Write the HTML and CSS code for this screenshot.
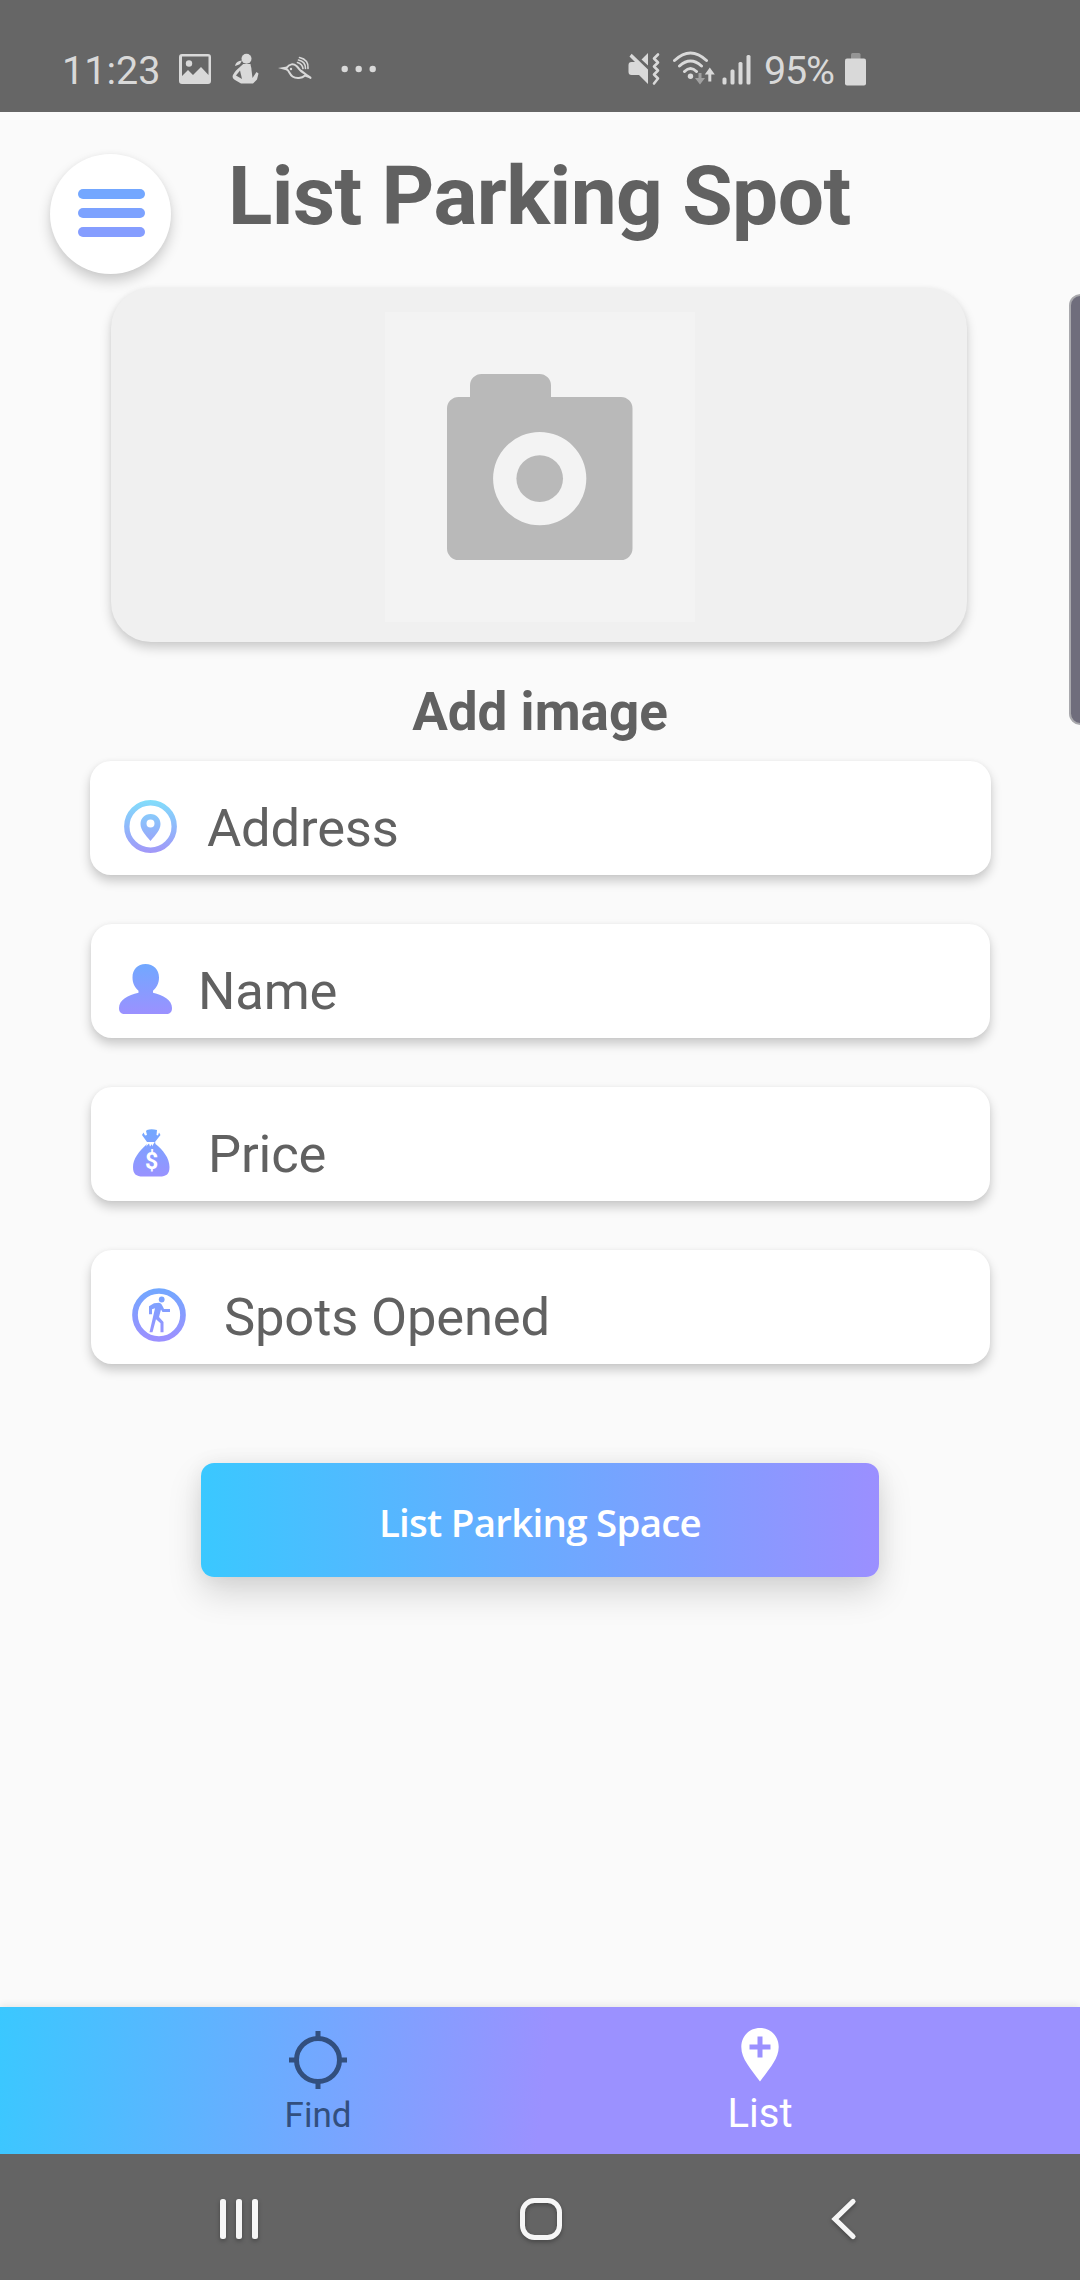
FILE: index.html
```html
<!DOCTYPE html>
<html lang="en">
<head>
<meta charset="utf-8">
<title>List Parking Spot</title>
<link rel="stylesheet" href="styles.css">
</head>
<body>
<svg class="defs" width="0" height="0" aria-hidden="true">
  <defs>
    <linearGradient id="sky" x1="0" y1="0" x2="0" y2="53" gradientUnits="userSpaceOnUse"><stop offset="0" stop-color="#82defb"/><stop offset=".5" stop-color="#8fb9fb"/><stop offset="1" stop-color="#a297f8"/></linearGradient>
    <linearGradient id="iris" x1="0" y1="0" x2="0" y2="50" gradientUnits="userSpaceOnUse"><stop offset="0" stop-color="#71a8ff"/><stop offset="1" stop-color="#9b91ff"/></linearGradient>
  </defs>
</svg>
<div class="screen">
  <header class="status">
    <span class="time">11:23</span>
    <svg class="notif" width="200" height="40" viewBox="0 0 200 40" fill="#d9d9d9">
      <path fill-rule="evenodd" d="M3 2h26a3 3 0 0 1 3 3v24a3 3 0 0 1-3 3H3a3 3 0 0 1-3-3V5a3 3 0 0 1 3-3zM3 4.500V24l6-6 5 5 8-8 7.500 8V4.500z"/>
      <circle cx="10" cy="11.500" r="3.200"/>
      <circle cx="67.500" cy="6.800" r="5"/>
      <path d="M64 12c-1 2-6 4-10 11-1 2 0 4 2 5l6 3.500h12l4-4 1.500-6-2-1.500-4 6-1-8c0-3-1-4-1-6z"/>
      <path d="M56 14c1-4 3-5 7-5.500L61 12c-1 1-3 1-5 2z"/>
      <path fill="#666" d="M57 23.500l4-5 2 8.500z"/>
      <path d="M99 16l9-1.500v4z"/>
      <path fill="none" stroke="#d9d9d9" stroke-width="2" stroke-linecap="round" stroke-linejoin="round" d="M107.500 16c3-4.500 7-4.500 10-2 3 3 4 5.500 6.500 6.500l7.500 5-5.500-2c-3 3-9 3.500-12.500 1-3-2-3-5.500-6-7.500M122.500 19l9 7"/>
      <path fill="none" stroke="#d9d9d9" stroke-width="1.600" stroke-linecap="round" d="M118.500 10.500c3.500 1 5 3 5.500 6M119.500 8c5 1 7 4.500 7 8.500M120.500 5.500c6.500 1.500 9 6 8.500 11"/>
      <circle cx="112" cy="17" r="1.200"/>
      <circle cx="165.700" cy="17" r="3.200"/><circle cx="179.700" cy="17" r="3.200"/><circle cx="193.700" cy="17" r="3.200"/>
    </svg>
    <svg class="signals" width="124" height="40" viewBox="0 0 124 40" fill="#d9d9d9">
      <path d="M3.500 11H7L1.500 5.500l2.200-2.700L20 18.500V33l-9-9H3.500a3 3 0 0 1-3-3v-7a3 3 0 0 1 3-3zM13.500 8.500L20 2v12.500z"/>
      <path fill="none" stroke="#d9d9d9" stroke-width="2.600" stroke-linecap="round" stroke-linejoin="round" d="M30 3.500l-4 4 4 4-4 4 4 4-4 4 4 4-4 5"/>
      <g fill="none" stroke="#d9d9d9" stroke-width="3" stroke-linecap="round"><path d="M46.500 9.500q16-15 32 0M51.500 15q11-10 22 0M56.500 20.500q6-6 12 0"/></g>
      <circle cx="62.500" cy="25.300" r="2.700"/>
      <path fill="#a0a0a0" d="M70.500 22h3v5h3.500l-5 6.500-5-6.500h3.500z"/>
      <path d="M80.300 30.500v-7h-3.500l5-7 5 7h-3.500v7z"/>
      <rect x="94.500" y="26.500" width="4" height="7" rx="1.500"/><rect x="102.500" y="18.500" width="4" height="15" rx="1.500"/><rect x="110.500" y="11" width="4" height="22.500" rx="1.500"/><rect x="118.500" y="4" width="4" height="29.500" rx="1.500"/>
    </svg>
    <span class="percent">95%</span>
    <svg class="battery" width="22" height="40" viewBox="0 0 22 40"><rect x="6" y="2" width="9.500" height="7" rx="1.500" fill="#959595"/><rect x="0" y="7.500" width="21" height="27" rx="2" fill="#d9d9d9"/></svg>
  </header>

  <main class="content">
    <div class="heading">
      <button class="menu" aria-label="Menu"><i class="bar top"></i><i class="bar middle"></i><i class="bar bottom"></i></button>
      <h1>List Parking Spot</h1>
    </div>

    <section class="photo">
      <div class="placeholder">
        <svg width="186" height="186" viewBox="0 0 186 186" fill="#b9b9b9">
          <path fill-rule="evenodd" d="M34.500 0h58a11.500 11.500 0 0 1 11.500 11.500V23h70a11.500 11.500 0 0 1 11.500 11.500v140a11.500 11.500 0 0 1-11.500 11.500H11.500a11.500 11.500 0 0 1-11.500-11.500v-140A11.500 11.500 0 0 1 11.500 23H23V11.500A11.500 11.500 0 0 1 34.500 0zM92.700 58a46.600 46.600 0 1 0 0 93.200 46.600 46.600 0 1 0 0-93.200z"/>
          <circle cx="92.700" cy="104.600" r="23.300"/>
        </svg>
      </div>
    </section>
    <h2>Add image</h2>

    <form class="fields">
      <label class="field address">
        <svg width="53" height="53" viewBox="0 0 53 53"><circle cx="26.500" cy="26.500" r="23.700" fill="none" stroke="url(#sky)" stroke-width="5.400"/><path fill="url(#sky)" fill-rule="evenodd" d="M26.500 14c6 0 10 4.500 10 10 0 6-5 11-10 17-5-6-10-11-10-17 0-5.500 4-10 10-10zm0 5.500a4 4 0 1 0 0 8 4 4 0 0 0 0-8z"/></svg>
        <span>Address</span>
      </label>
      <label class="field name">
        <svg width="53" height="50" viewBox="0 0 53 50"><path fill="url(#iris)" d="M26.500 0C34.500 0 40 5.500 40 13.500c0 6-2.500 10-6 13.200v2C44 31 53 36 53 44c0 4-2 6-6 6H6c-4 0-6-2-6-6 0-8 9-13 19.500-15.300v-2C16 23.500 13.500 19.500 13.500 13.500 13.500 5.500 18.500 0 26.500 0z"/></svg>
        <span>Name</span>
      </label>
      <label class="field price">
        <svg width="37" height="48" viewBox="0 0 37 48"><path fill="url(#iris)" d="M14 1c3-1 6-1 10 0l-.5 5 1.500.5 1-3 1.500 2.500-5.500 7h-8L9 6l1.500-2.500 1.500 3 2-.5-1-4zM14 15l-1 2.500 3-3 1 3 2-2.500v2.500l3-5 .5 2.500C30 21 36.500 29 36.500 38c0 7-3 9.500-10 9.500H10C3 47.500 0 45 0 38c0-8 6-16 14-23z"/><text x="18.400" y="40" class="dollar">$</text></svg>
        <span>Price</span>
      </label>
      <label class="field spots">
        <svg width="54" height="54" viewBox="0 0 54 54"><circle cx="27" cy="27" r="24" fill="none" stroke="url(#iris)" stroke-width="5.700"/><circle cx="29.700" cy="11.500" r="2.900" fill="url(#iris)"/><path fill="url(#iris)" d="M22 15.200l5-.5c2 0 3 2 5 6.300h6v3h-7.500l-1.500-2.500-2 7.500 4.500 5v10.300h-3v-9l-4.500-4-3.500 13h-3l5.500-24-3 1v5h-3v-8z"/></svg>
        <span>Spots Opened</span>
      </label>
    </form>

    <button class="submit">List Parking Space</button>
    <div class="edge-panel"></div>
  </main>

  <nav class="tabs">
    <a class="tab find">
      <svg width="58" height="67" viewBox="0 0 58 67" fill="none" stroke="#324f7e" stroke-width="5"><circle cx="29" cy="31" r="21.500"/><path d="M29 2v7M29 53v7M0 31h7M51 31h7"/></svg>
      <span>Find</span>
    </a>
    <a class="tab list">
      <svg width="38" height="54" viewBox="0 0 38 54"><path fill="#fff" fill-rule="evenodd" d="M19 0c11 0 18.700 8.300 18.700 19C37.700 31 28 41 19 53.500 10 41 .3 31 .3 19 .3 8.300 8 0 19 0zm-2.500 8.500v8h-8v5h8v8h5v-8h8v-5h-8v-8z"/></svg>
      <span>List</span>
    </a>
  </nav>

  <footer class="system">
    <svg width="40" height="46" viewBox="0 0 40 46" fill="#f6f6f6"><rect x="1" y="2" width="6" height="40" rx="2.500"/><rect x="17" y="2" width="6" height="40" rx="2.500"/><rect x="33" y="2" width="6" height="40" rx="2.500"/></svg>
    <svg width="42" height="46" viewBox="0 0 42 46"><rect x="2.500" y="3.500" width="37" height="37" rx="12" fill="none" stroke="#f6f6f6" stroke-width="5"/></svg>
    <svg width="26" height="46" viewBox="0 0 26 46"><path d="M22 4.500L4 22l18 17.500" fill="none" stroke="#f6f6f6" stroke-width="5.200" stroke-linecap="round"/></svg>
  </footer>
</div>
</body>
</html>
```

FILE: styles.css
```css
* { box-sizing: border-box; }
body { margin: 0; background: #fafafa; font-family: Roboto, "Liberation Sans", sans-serif; color: #616161; }
.defs { position: absolute; }
svg { display: block; flex: none; }
button { border: 0; padding: 0; font: inherit; }
h1, h2 { margin: 0; font-weight: 700; white-space: nowrap; }
.screen { display: flex; flex-direction: column; width: 1080px; height: 2280px; overflow: hidden; }

.status { display: flex; align-items: flex-start; height: 112px; padding: 50px 0 0 62px; background: #666; color: #d9d9d9; font-size: 39.500px; line-height: 41px; white-space: nowrap; }
.time { width: 117px; }
.notif { margin-top: 2px; }
.signals { margin: 1px 0 0 249px; }
.percent { width: 81px; margin-left: 12px; letter-spacing: -1.2px; }
.battery { margin-top: 1px; }

.content { position: relative; flex: none; height: 1895px; }
.heading { display: flex; align-items: flex-start; height: 176px; padding: 36px 0 0 50px; }
.menu { display: flex; flex-direction: column; align-items: center; justify-content: center; gap: 9.500px; width: 121px; height: 120px; margin-top: 5.500px; padding-bottom: 1px; border-radius: 50%; background: #fff; box-shadow: 0 7px 13px rgba(0, 0, 0, .19), 0 0 5px rgba(0, 0, 0, .04); }
.bar { width: 67px; height: 9.500px; margin-left: 1px; border-radius: 5px; }
.top { background: #73a7ff; }
.middle { background: #7ca2ff; }
.bottom { background: #859dff; }
h1 { margin-left: 57px; font-size: 82px; line-height: 96px; letter-spacing: -0.55px; }

.photo { display: flex; justify-content: center; width: 856px; height: 354px; margin-left: 111px; padding: 23.500px 0 0 1px; border-radius: 40px; background: #f0f0f0; box-shadow: 0 6px 11px rgba(0, 0, 0, .18), 0 0 5px rgba(0, 0, 0, .04); }
.placeholder { width: 310px; height: 310px; padding: 62px; background: #f3f3f3; }
h2 { margin-top: 40px; text-align: center; font-size: 53px; line-height: 60px; }

.fields { display: flex; flex-direction: column; gap: 49px; margin: 19px 90px 0 91px; }
.field { display: flex; align-items: flex-start; height: 114px; padding-top: 20px; border-radius: 21px; background: #fff; box-shadow: 0 6px 11px rgba(0, 0, 0, .2), 0 0 5px rgba(0, 0, 0, .04); font-size: 52.500px; line-height: 94px; letter-spacing: -0.15px; white-space: nowrap; }
.address { margin-left: -1px; margin-right: -1px; }
.address svg { margin: 19px 30px 0 34px; }
.name svg { margin: 20px 26px 0 28px; }
.price svg { margin: 22px 38px 0 42px; }
.spots svg { margin: 18px 38px 0 41px; }
.dollar { font: 700 23px Roboto, sans-serif; fill: #fff; text-anchor: middle; }

.submit { display: block; width: 678px; height: 114px; margin: 98.500px 0 0 201px; border-radius: 13px; background: linear-gradient(90deg, #3ac8ff, #5ab4ff 33%, #77a3ff 63%, #9b8fff); box-shadow: 0 16px 34px rgba(0, 0, 0, .15), 0 0 20px rgba(0, 0, 0, .06); color: #fff; font: 600 38.500px/118px "Open Sans", "Noto Sans", sans-serif; letter-spacing: -0.75px; white-space: nowrap; }
.edge-panel { position: absolute; right: -12px; top: 182px; width: 23px; height: 431px; border: 2px solid #a9a9ad; border-radius: 12px; background: #6f6d7c; }

.tabs { display: flex; flex: none; height: 147px; padding-left: 97px; background: linear-gradient(97deg, #3ac8ff 0%, #9b91ff 50.500%); box-shadow: 0 -2px 7px rgba(0, 0, 0, .08); }
.tab { display: flex; flex-direction: column; align-items: center; width: 442px; }
.find { color: #324f7e; font-size: 35px; line-height: 40px; }
.find svg { margin: 22px 0 0; }
.list { color: #fff; font-size: 40px; line-height: 46px; }
.list svg { margin: 21px 0 9px; }

.system { display: flex; flex: none; align-items: flex-start; height: 126px; padding: 43px 0 0 219px; background: #646464; }
.system svg { filter: drop-shadow(0 2px 2px rgba(0, 0, 0, .3)); }
.system svg:nth-child(2) { margin: 0 269px 0 261px; }
```
